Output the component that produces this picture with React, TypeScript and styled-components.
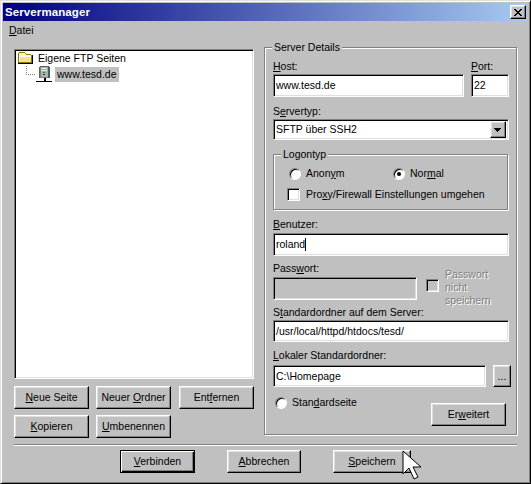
import styled, { createGlobalStyle, css } from "styled-components";

const GlobalStyle = createGlobalStyle`
  html, body {
    margin: 0;
    padding: 0;
    background: #c0c0c0;
  }
`;

const raised = css`
  box-sizing: border-box;
  background: #c0c0c0;
  border: 1px solid;
  border-color: #fff #000 #000 #fff;
  box-shadow: inset -1px -1px 0 #808080, inset 1px 1px 0 #dfdfdf;
`;

const sunken = css`
  box-sizing: border-box;
  border: 1px solid;
  border-color: #808080 #fff #fff #808080;
  box-shadow: inset 1px 1px 0 #000, inset -1px -1px 0 #dfdfdf;
`;

const Window = styled.div`
  position: relative;
  box-sizing: border-box;
  width: 531px;
  height: 484px;
  padding: 2px 3px 2px 2px;
  overflow: hidden;
  background: #c0c0c0;
  border: 1px solid;
  border-color: #dfdfdf #000 #000 #dfdfdf;
  box-shadow: inset 1px 1px 0 #fff, inset -1px -1px 0 #808080;
  font: 10.5px/13px "Liberation Sans", Arial, sans-serif;
  color: #000;
  display: flex;
  flex-direction: column;
`;

const TitleBar = styled.div`
  height: 18px;
  flex: none;
  display: flex;
  align-items: center;
  justify-content: space-between;
  padding: 0 1px 0 2px;
  background: linear-gradient(90deg, #000080, #a6caf0);
`;

const TitleText = styled.span`
  color: #fff;
  font-size: 11.5px;
  font-weight: bold;
  letter-spacing: 0.1px;
`;

const CloseButton = styled.div`
  ${raised}
  width: 16px;
  height: 14px;
  display: flex;
  align-items: center;
  justify-content: center;
`;

const MenuBar = styled.div`
  height: 19px;
  flex: none;
  display: flex;
  align-items: center;
  padding-left: 6px;
`;

const Main = styled.div`
  display: flex;
  height: 395px;
  flex: none;
  padding-top: 7px;
  padding-left: 11px;
  gap: 10px;
`;

const LeftColumn = styled.div`
  width: 240px;
  flex: none;
  display: flex;
  flex-direction: column;
  gap: 6px;
  padding-top: 2px;
`;

const Tree = styled.div`
  ${sunken}
  height: 330px;
  flex: none;
  margin-bottom: 1px;
  background: #fff;
  padding-left: 2px;
  display: flex;
  flex-direction: column;
`;

const TreeRow = styled.div<{ $indent?: number }>`
  display: flex;
  align-items: center;
  height: 16px;
  padding-left: ${(p) => p.$indent ?? 0}px;
`;

const TreeLabel = styled.span<{ $selected?: boolean }>`
  margin-left: 3px;
  padding: 0 2px;
  height: 15px;
  line-height: 15px;
  background: ${(p) => (p.$selected ? "#c0c0c0" : "transparent")};
`;

const ButtonRow = styled.div`
  display: flex;
  gap: 7px;
`;

const Button = styled.div<{ $width?: number; $height?: number; $default?: boolean }>`
  ${raised}
  width: ${(p) => p.$width ?? 75}px;
  height: ${(p) => p.$height ?? 23}px;
  flex: none;
  display: flex;
  align-items: center;
  justify-content: center;
  ${(p) =>
    p.$default &&
    css`
      border-color: #000;
      box-shadow: inset 1px 1px 0 #fff, inset -1px -1px 0 #000,
        inset -2px -2px 0 #808080;
    `}
`;

const RemoveButton = styled(Button)`
  margin-left: 1px;
`;

const AdvancedButton = styled(Button)`
  margin-top: 7px;
`;

const GroupBox = styled.div`
  position: relative;
  box-sizing: border-box;
  border: 1px solid #808080;
  box-shadow: 1px 1px 0 #fff, inset 1px 1px 0 #fff;
`;

const ServerGroup = styled(GroupBox)`
  width: 253px;
  height: 388px;
  padding: 12px 7px 0 8px;
  display: flex;
  flex-direction: column;
`;

const Legend = styled.span`
  position: absolute;
  top: -7px;
  left: 7px;
  padding: 0 2px;
  background: #c0c0c0;
`;

const Label = styled.div<{ $top?: number; $gap?: number }>`
  height: 13px;
  margin-top: ${(p) => p.$top ?? 0}px;
  margin-bottom: ${(p) => p.$gap ?? 1}px;
  white-space: nowrap;
`;

const Split = styled.div`
  display: flex;
  gap: 7px;
  align-items: flex-end;
`;

const Field = styled.div<{ $width?: number; $disabled?: boolean; $height?: number }>`
  ${sunken}
  width: ${(p) => (p.$width ? `${p.$width}px` : "100%")};
  height: ${(p) => p.$height ?? 23}px;
  flex: none;
  padding-left: 2px;
  display: flex;
  align-items: center;
  background: ${(p) => (p.$disabled ? "#c0c0c0" : "#fff")};
  white-space: nowrap;
`;

const Caret = styled.span`
  width: 1px;
  height: 13px;
  background: #000;
`;

const ComboArrow = styled.div`
  ${raised}
  width: 16px;
  height: 17px;
  margin-left: auto;
  margin-right: 2px;
  display: flex;
  align-items: center;
  justify-content: center;
`;

const LogonGroup = styled(GroupBox)`
  height: 56px;
  flex: none;
  width: 235px;
  margin-top: 14px;
  padding: 12px 0 0 15px;
  display: flex;
  flex-direction: column;
  gap: 8px;
`;

const OptionRow = styled.div`
  display: flex;
  align-items: center;
`;

const RadioOption = styled.div<{ $width?: number }>`
  display: flex;
  align-items: center;
  gap: 5px;
  width: ${(p) => (p.$width ? `${p.$width}px` : "auto")};
`;

const Radio = styled.span<{ $checked?: boolean }>`
  box-sizing: border-box;
  width: 12px;
  height: 12px;
  flex: none;
  border-radius: 50%;
  background: #fff;
  border: 1px solid;
  border-color: #808080 #fff #fff #808080;
  box-shadow: inset 1px 1px 0 #000;
  display: flex;
  align-items: center;
  justify-content: center;
  &::after {
    content: "";
    width: 4px;
    height: 4px;
    border-radius: 50%;
    background: ${(p) => (p.$checked ? "#000" : "transparent")};
  }
`;

const Checkbox = styled.span<{ $disabled?: boolean }>`
  ${sunken}
  width: 13px;
  height: 13px;
  flex: none;
  background: ${(p) => (p.$disabled ? "#c0c0c0" : "#fff")};
`;

const LogonCheck = styled(Checkbox)`
  margin-left: -2px;
`;

const CheckLabel = styled.span`
  margin-left: 6px;
  white-space: nowrap;
`;

const PasswordRow = styled.div`
  display: flex;
  align-items: flex-start;
  height: 23px;
  flex: none;
`;

const SavePassword = styled.div`
  display: flex;
  align-items: flex-start;
  margin: -9px 0 0 9px;
`;

const SaveCheck = styled(Checkbox)`
  margin-top: 11px;
`;

const DisabledText = styled.span`
  margin-left: 6px;
  color: #808080;
  text-shadow: 1px 1px 0 #fff;
  width: 56px;
`;

const BottomRow = styled.div`
  display: flex;
  justify-content: space-between;
  align-items: flex-start;
  padding: 9px 3px 0 2px;
`;

const Separator = styled.div`
  height: 1px;
  flex: none;
  margin: 2px 10px 0 11px;
  background: #808080;
  box-shadow: 0 1px 0 #fff;
`;

const Footer = styled.div`
  display: flex;
  padding: 5px 0 0 117px;
  gap: 32px;
`;

const Pointer = styled.svg`
  position: absolute;
  left: 401px;
  top: 449px;
`;

const FolderIcon = () => (
  <svg width="16" height="12" viewBox="0 0 16 12" shapeRendering="crispEdges">
    <path d="M1 1h1V0h6v1h1v1h5v1h1v8H1z" fill="#808000" />
    <path d="M2 1h6v1h1v1h5v7H2z" fill="#ffffa0" />
    <path d="M2 4h12v1H2z" fill="#fff" />
    <path d="M3 5h11v5H3z" fill="#f8e090" />
    <path d="M1 11h15v1H1zM15 3h1v9h-1z" fill="#000" />
  </svg>
);

const ServerIcon = () => (
  <svg width="27" height="16" viewBox="0 0 27 16" shapeRendering="crispEdges">
    <path
      d="M1 0h1v1H1zM1 2h1v1H1zM1 4h1v1H1zM1 6h1v1H1zM1 8h1v1H1zM3 8h1v1H3zM5 8h1v1H5zM7 8h1v1H7zM9 8h1v1H9z"
      fill="#808080"
    />
    <path d="M15 1h10v11H15z" fill="#808080" />
    <path d="M16 1h7v10h-7z" fill="#a8b0b0" />
    <path d="M16 2h6v1h-6zM16 4h6v1h-6z" fill="#dfe4e4" />
    <path d="M23 1h2v11h-2z" fill="#406060" />
    <path d="M15 0h9v1h-9zM14 1h1v11h-1z" fill="#606060" />
    <path d="M18 6h2v1h-2z" fill="#00a000" />
    <path d="M18 8h2v1h-2z" fill="#d00000" />
    <path d="M19 12h2v3h-2z" fill="#000" />
    <path d="M11 15h16v1H11z" fill="#000" />
  </svg>
);

export default function App() {
  return (
    <>
      <GlobalStyle />
      <Window>
        <TitleBar>
          <TitleText>Servermanager</TitleText>
          <CloseButton>
            <svg width="8" height="7" viewBox="0 0 8 7" shapeRendering="crispEdges">
              <path
                d="M0 0h2v1h1v1h2V1h1V0h2v1H7v1H6v1H5v1h1v1h1v1h1v1H6V6H5V5H3v1H2v1H0V6h1V5h1V4h1V3H2V2H1V1H0z"
                fill="#000"
              />
            </svg>
          </CloseButton>
        </TitleBar>
        <MenuBar>
          <span>
            <u>D</u>atei
          </span>
        </MenuBar>
        <Main>
          <LeftColumn>
            <Tree>
              <TreeRow>
                <FolderIcon />
                <TreeLabel>Eigene FTP Seiten</TreeLabel>
              </TreeRow>
              <TreeRow $indent={8}>
                <ServerIcon />
                <TreeLabel $selected>www.tesd.de</TreeLabel>
              </TreeRow>
            </Tree>
            <ButtonRow>
              <Button>
                <span>
                  <u>N</u>eue Seite
                </span>
              </Button>
              <Button>
                <span>
                  Neuer <u>O</u>rdner
                </span>
              </Button>
              <RemoveButton>
                <span>
                  Ent<u>f</u>ernen
                </span>
              </RemoveButton>
            </ButtonRow>
            <ButtonRow>
              <Button>
                <span>
                  <u>K</u>opieren
                </span>
              </Button>
              <Button>
                <span>
                  <u>U</u>mbenennen
                </span>
              </Button>
            </ButtonRow>
          </LeftColumn>
          <ServerGroup>
            <Legend>Server Details</Legend>
            <Split>
              <div>
                <Label>
                  <u>H</u>ost:
                </Label>
                <Field $width={191}>www.tesd.de</Field>
              </div>
              <div>
                <Label>
                  <u>P</u>ort:
                </Label>
                <Field $width={38}>22</Field>
              </div>
            </Split>
            <Label $top={8}>
              S<u>e</u>rvertyp:
            </Label>
            <Field $height={21}>
              SFTP über SSH2
              <ComboArrow>
                <svg width="8" height="4" viewBox="0 0 8 4" shapeRendering="crispEdges">
                  <path d="M0 0h7v1H6v1H5v1H4v1H3V3H2V2H1V1H0z" fill="#000" />
                </svg>
              </ComboArrow>
            </Field>
            <LogonGroup>
              <Legend>Logontyp</Legend>
              <OptionRow>
                <RadioOption $width={104}>
                  <Radio />
                  <span>
                    Anon<u>y</u>m
                  </span>
                </RadioOption>
                <RadioOption>
                  <Radio $checked />
                  <span>
                    Nor<u>m</u>al
                  </span>
                </RadioOption>
              </OptionRow>
              <OptionRow>
                <LogonCheck />
                <CheckLabel>
                  Pro<u>x</u>y/Firewall Einstellungen umgehen
                </CheckLabel>
              </OptionRow>
            </LogonGroup>
            <Label $top={8} $gap={2}>
              <u>B</u>enutzer:
            </Label>
            <Field>
              roland
              <Caret />
            </Field>
            <Label $top={6} $gap={2}>
              Pass<u>w</u>ort:
            </Label>
            <PasswordRow>
              <Field $width={144} $disabled />
              <SavePassword>
                <SaveCheck $disabled />
                <DisabledText>Passwort nicht speichern</DisabledText>
              </SavePassword>
            </PasswordRow>
            <Label $top={6}>
              S<u>t</u>andardordner auf dem Server:
            </Label>
            <Field $height={22}>/usr/local/httpd/htdocs/tesd/</Field>
            <Label $top={7} $gap={3}>
              <u>L</u>okaler Standardordner:
            </Label>
            <Split>
              <Field $width={213} $height={22}>
                C:\Homepage
              </Field>
              <Button $width={18} $height={22}>
                ...
              </Button>
            </Split>
            <BottomRow>
              <RadioOption>
                <Radio />
                <span>
                  Stan<u>d</u>ardseite
                </span>
              </RadioOption>
              <AdvancedButton>
                <span>
                  Er<u>w</u>eitert
                </span>
              </AdvancedButton>
            </BottomRow>
          </ServerGroup>
        </Main>
        <Separator />
        <Footer>
          <Button $default>
            <span>
              <u>V</u>erbinden
            </span>
          </Button>
          <Button $width={74}>
            <span>
              <u>A</u>bbrechen
            </span>
          </Button>
          <Button $width={78}>
            <span>
              <u>S</u>peichern
            </span>
          </Button>
        </Footer>
        <Pointer width="20" height="30" viewBox="0 0 20 30">
          <path
            d="M1 1v23l6-6 5 11 4-2-5-10h8z"
            fill="#fff"
            stroke="#000"
            strokeWidth="1"
          />
        </Pointer>
      </Window>
    </>
  );
}
